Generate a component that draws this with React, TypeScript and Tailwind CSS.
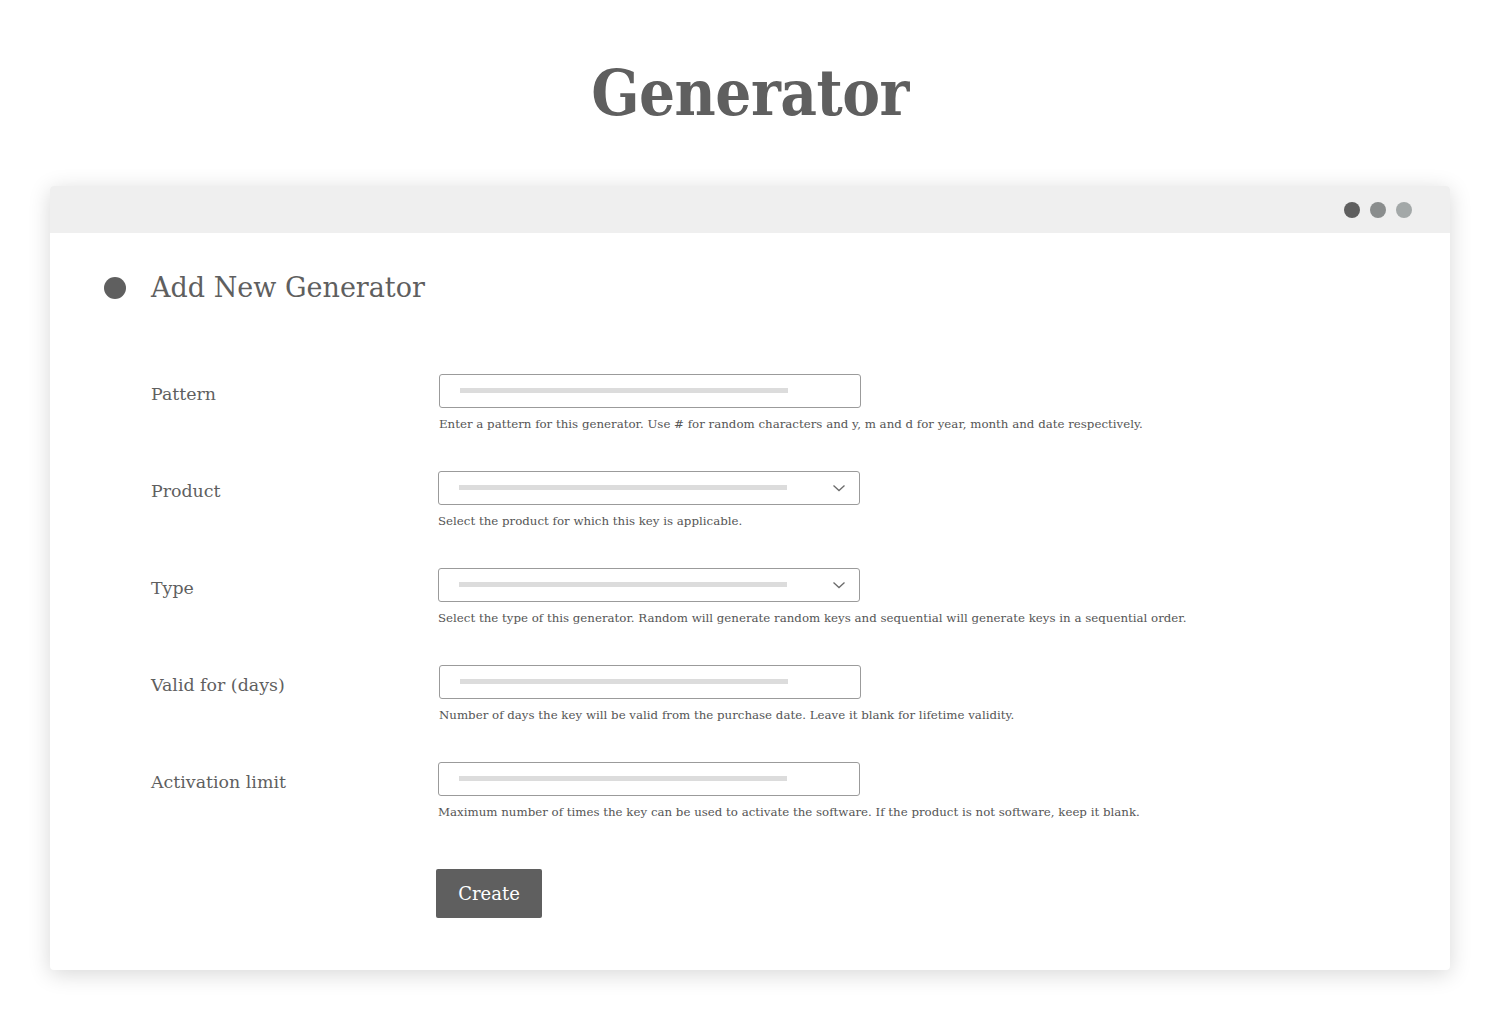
import React from "react";

const font = { fontFamily: '"DejaVu Serif", "Liberation Serif", serif' };

function Field({ label, help, select, offset }: { label: string; help: string; select?: boolean; offset?: boolean }) {
  return (
    <div className="flex h-[97px]">
      <div className="w-[287px] pt-[7px] text-[17.4px] text-[#5f5f5f]">{label}</div>
      <div className={offset ? "" : "ml-px"}>
        <div className="relative flex h-[34px] w-[422px] items-center rounded-[3px] border border-[#9b9b9b] bg-white pl-[20px]">
          <div className="h-[5px] w-[328px] bg-[#dcdcdc]" />
          {select && (
            <svg className="absolute right-[13px] top-[11px]" width="14" height="10" viewBox="0 0 14 10" fill="none">
              <path d="M1.5 2.5 L7 7.5 L12.5 2.5" stroke="#6b6b6b" strokeWidth="1.3" />
            </svg>
          )}
        </div>
        <div className="mt-[8px] text-[11.8px] text-[#555555]">{help}</div>
      </div>
    </div>
  );
}

export default function App() {
  return (
    <div className="min-h-[1020px] bg-white" style={font}>
      <div className="flex justify-center pt-[62px]">
        <h1 className="font-stretch-condensed text-[63px] font-bold leading-none tracking-[-0.5px] text-[#5f5f5f]">Generator</h1>
      </div>
      <div className="mx-[50px] mt-[61px] rounded-[4px] bg-white shadow-[0_4px_22px_rgba(0,0,0,0.16)] overflow-hidden">
        <div className="flex h-[47px] items-center justify-end gap-[10px] bg-[#efefef] pr-[38px]">
          <span className="h-[16px] w-[16px] rounded-full bg-[#5f5f5f]" />
          <span className="h-[16px] w-[16px] rounded-full bg-[#8a8d8d]" />
          <span className="h-[16px] w-[16px] rounded-full bg-[#a3a8a8]" />
        </div>
        <div className="pl-[54px] pt-[35px] pb-[52px]">
          <div className="flex items-center">
            <span className="h-[22px] w-[22px] rounded-full bg-[#5f5f5f]" />
            <h2 className="ml-[25px] text-[27px] text-[#5f5f5f]">Add New Generator</h2>
          </div>
          <div className="mt-[65px] pl-[47px]">
            <Field label="Pattern" help="Enter a pattern for this generator. Use # for random characters and y, m and d for year, month and date respectively." />
            <Field label="Product" select offset help="Select the product for which this key is applicable." />
            <Field label="Type" select offset help="Select the type of this generator. Random will generate random keys and sequential will generate keys in a sequential order." />
            <Field label="Valid for (days)" help="Number of days the key will be valid from the purchase date. Leave it blank for lifetime validity." />
            <Field label="Activation limit" offset help="Maximum number of times the key can be used to activate the software. If the product is not software, keep it blank." />
            <div className="ml-[285px] mt-[10px]">
              <button className="h-[49px] w-[106px] rounded-[2px] bg-[#5f5f5f] text-[18px] text-white">Create</button>
            </div>
          </div>
        </div>
      </div>
    </div>
  );
}
